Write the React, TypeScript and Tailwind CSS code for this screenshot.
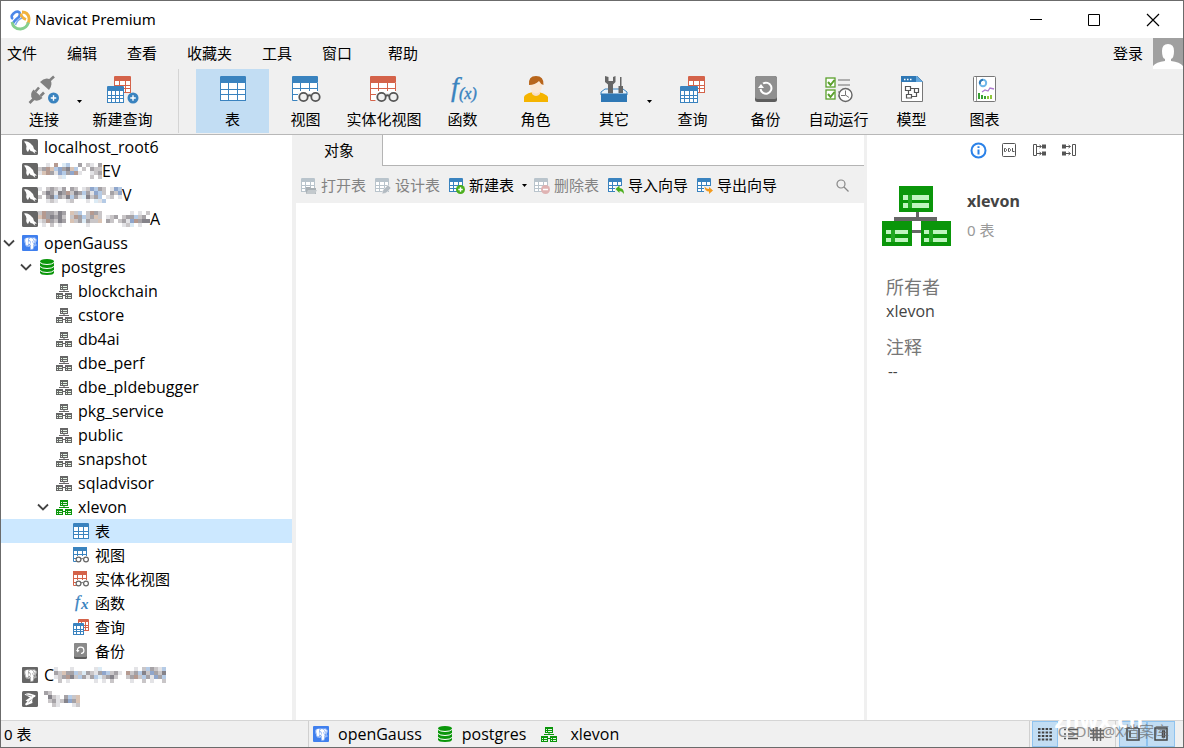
import { useState } from 'react';
import type { ReactNode } from 'react';
import { BiLogoPostgresql } from 'react-icons/bi';

const BLUE = '#3a83bf';
const RED = '#d4634a';
const PALE = '#b9c4cc';
const GREEN = '#0a960a';

interface GridProps {
  x: number;
  y: number;
  w: number;
  h: number;
  head: number;
  color: string;
  cols?: number;
  rows?: number;
}

function Grid({ x, y, w, h, head, color, cols = 3, rows = 3 }: GridProps) {
  const cw = (w - 1) / cols;
  const rh = (h - head - 1) / rows;
  return (
    <g>
      <rect x={x} y={y} width={w} height={h} rx={1} fill="#fff" />
      <rect x={x} y={y} width={w} height={head} rx={1} fill={color} />
      {Array.from({ length: cols + 1 }, (_, i) => (
        <rect key={`c${i}`} x={x + Math.round(i * cw)} y={y + head - 1} width={1} height={h - head + 1} fill={color} />
      ))}
      {Array.from({ length: rows }, (_, i) => (
        <rect key={`r${i}`} x={x} y={y + head + Math.round((i + 1) * rh)} width={w} height={1} fill={color} />
      ))}
    </g>
  );
}

function Plus({ cx, cy, r, color }: { cx: number; cy: number; r: number; color: string }) {
  return (
    <g>
      <circle cx={cx} cy={cy} r={r} fill={color} />
      <path d={`M${cx - r / 2} ${cy}h${r}M${cx} ${cy - r / 2}v${r}`} stroke="#fff" strokeWidth={1.4} />
    </g>
  );
}

function Svg({ w, h, children }: { w: number; h: number; children: ReactNode }) {
  return (
    <svg width={w} height={h} viewBox={`0 0 ${w} ${h}`} fill="none" className="shrink-0 overflow-visible" aria-hidden="true">
      {children}
    </svg>
  );
}

/* Toolbar icons */

const ConnectIcon = () => (
  <Svg w={32} h={28}>
    <path d="M12 6Q17 .500 22 3.500 25.500 8 21 14z" fill="#808080" />
    <path d="M21 5 26 .500" stroke="#808080" strokeWidth={2.600} />
    <path d="M5.500 13.500 14.500 22Q9 27 4.500 23 1 18.500 5.500 13.500z" fill="#808080" />
    <path d="M6.500 22 1.500 27M7.500 15.500l3.500-4M12.500 20l3.500-3.500" stroke="#808080" strokeWidth={2.600} />
    <Plus cx={25.5} cy={22} r={5.5} color={BLUE} />
  </Svg>
);

const NewQueryIcon = () => (
  <Svg w={32} h={28}>
    <Grid x={7} y={0} w={17} h={17} head={5} color={RED} />
    <Grid x={0} y={10} w={17} h={17} head={5} color={BLUE} cols={4} rows={3} />
    <Plus cx={26} cy={22} r={5.5} color={BLUE} />
  </Svg>
);

const TableIcon = () => (
  <Svg w={26} h={28}>
    <Grid x={0} y={0} w={26} h={25} head={7} color={BLUE} />
  </Svg>
);

function ViewIcon({ color }: { color: string }) {
  return (
    <Svg w={28} h={28}>
      <rect width={26} height={25} rx={1} fill="#fff" />
      <rect width={26} height={7} rx={1} fill={color} />
      <path d="M.5 6v18.500h5M.5 12.500h25M.5 18.500h6M8.500 7v8M17.500 7v8M25.500 7v8" stroke={color} />
      <path d="M6 17h22v9H6z" fill="#f0f0f0" />
      <circle cx={11.5} cy={21} r={4.200} stroke="#555" strokeWidth={1.800} fill="#f0f0f0" />
      <circle cx={23.5} cy={21} r={4.200} stroke="#555" strokeWidth={1.800} fill="#f0f0f0" />
      <path d="M15.500 20q2-1.500 4 0" stroke="#555" strokeWidth={1.800} />
    </Svg>
  );
}

const FunctionIcon = () => (
  <Svg w={30} h={28}>
    <text x={3} y={20} fontSize={28} fontStyle="italic" fill={BLUE} stroke={BLUE} strokeWidth={0.3} fontFamily="Liberation Serif, serif">f</text>
    <text x={11} y={23} fontSize={16} fontStyle="italic" fill={BLUE} stroke={BLUE} strokeWidth={0.4} fontFamily="Liberation Serif, serif">(x)</text>
  </Svg>
);

const RoleIcon = () => (
  <Svg w={26} h={28}>
    <path d="M1 26v-5q1-3 7-4.500h9q6 1.500 8 4.500v5z" fill="#f5b400" />
    <path d="M9 14h8v4q-4 4-8 0z" fill="#f7dcc2" />
    <ellipse cx={13} cy={10} rx={6} ry={7.500} fill="#fbe7d3" />
    <path d="M6 9Q5 0 13 0q8 0 7.500 9-3-1-4.500-4-4 4-10 4z" fill="#b8651b" />
  </Svg>
);

const OtherIcon = () => (
  <Svg w={28} h={28}>
    <path d="M1 16 5 13h18l4 3v3H1z" fill="#e9f2f9" stroke={BLUE} />
    <path d="M5 0v6l3 2.500v9h5v-9L15.500 6V0L13 1v4h-4.500V1z" fill="#666" />
    <path d="M20 1v9h-1.500v7h4.500v-7h-1.500V1z" fill="#666" />
    <path d="M1 17.500h26V26H1z" fill="#2f78b5" />
  </Svg>
);

const QueryIcon = () => (
  <Svg w={26} h={28}>
    <Grid x={8} y={0} w={17} h={17} head={5} color={RED} />
    <Grid x={0} y={10} w={18} h={17} head={5} color={BLUE} cols={4} />
  </Svg>
);

const BackupIcon = () => (
  <Svg w={22} h={28}>
    <rect width={22} height={26} rx={2.500} fill="#5d5d5d" />
    <rect width={22} height={23} rx={2.500} fill="#8f8f8f" />
    <path d="M5.500 13A5.500 5.500 0 1 0 8 7.500" stroke="#fff" strokeWidth={2} />
    <path d="M3 12h6L6 8z" fill="#fff" />
  </Svg>
);

const AutoRunIcon = () => (
  <Svg w={28} h={28}>
    <g stroke="#5aa02c" strokeWidth={1.300}>
      <rect x={1} y={2} width={9} height={9} fill="#fff" />
      <rect x={1} y={14} width={9} height={9} fill="#fff" />
      <path d="M3 6l2.500 3L9.500 4M3 18l2.500 3 4-5" strokeWidth={2} />
    </g>
    <path d="M13 4h12M13 9h12M13 16h3M13 20h2" stroke="#999" strokeWidth={1.600} />
    <circle cx={20.500} cy={19} r={6.500} fill="#fff" stroke="#666" strokeWidth={1.400} />
    <path d="M20.500 14.500V19l3.500 2.500M16 19.500h4.500" stroke="#777" />
  </Svg>
);

const ModelIcon = () => (
  <Svg w={22} h={28}>
    <path d="M.5.500h16l5 5v20H.5z" fill="#fff" stroke="#777" />
    <path d="M0 0h16l6 6H0z" fill="#2f78b5" />
    <path d="M15 0h1l6 6h-7z" fill="#65a9df" />
    <path d="M3 3.500h1.500M6 3.500h1.500M9 3.500h1.500" stroke="#fff" strokeWidth={1.500} />
    <g stroke="#555" strokeWidth={1.200}>
      <path d="M4.500 10.500h5v4h-5zM13.500 12.500h4v4h-4zM5.500 18.500h5v3.500h-5zM9.500 12.500h4M7.500 14.500v4M10.500 20.500h5v-4" />
    </g>
  </Svg>
);

const ChartIcon = () => (
  <Svg w={24} h={28}>
    <rect x={0.500} y={0.500} width={22} height={25} rx={1} fill="#fff" stroke="#777" />
    <path d="M3.500 1v24" stroke="#999" />
    <circle cx={10} cy={7} r={3.200} stroke="#6fb7ea" strokeWidth={2} />
    <path d="M10 3.800A3.200 3.200 0 0 0 7 8" stroke="#2f78b5" strokeWidth={2} />
    <path d="M9 16l3-2 3 1 2-3 4 1" stroke="#ae7bd0" strokeWidth={1.300} />
    <path d="M6 17v6M9 19v4M12 20v3" stroke="#3aa035" strokeWidth={2} />
    <path d="M15 20v3M18 19v4" stroke="#8fc63d" strokeWidth={2} />
  </Svg>
);

/* 16 x 16 icons for the tree, object bar and status bar */

const SmallTable = () => (
  <Svg w={16} h={16}>
    <Grid x={0} y={0} w={16} h={16} head={4} color={BLUE} />
  </Svg>
);

function SmallView({ color }: { color: string }) {
  return (
    <Svg w={16} h={16}>
      <path d="M0 0h14v4H0z" fill={color} />
      <path d="M.5 2v12.500h3M13.500 4v5M4.500 4v5M9.500 4v5M.5 7.500h13M.5 11.500h3" stroke={color} />
      <circle cx={5.500} cy={12.500} r={2.400} stroke="#666" fill="#fff" strokeWidth={1.200} />
      <circle cx={13} cy={12.500} r={2.400} stroke="#666" fill="#fff" strokeWidth={1.200} />
      <path d="M8 12q1.200-1 2.400 0" stroke="#666" />
    </Svg>
  );
}

const SmallFx = () => (
  <Svg w={16} h={16}>
    <text x={2} y={12} fontSize={17} fontStyle="italic" fill={BLUE} stroke={BLUE} strokeWidth={0.3} fontFamily="Liberation Serif, serif">f</text>
    <text x={8} y={14} fontSize={15} fontWeight={700} fontStyle="italic" fill={BLUE} fontFamily="Liberation Serif, serif">x</text>
  </Svg>
);

const SmallQuery = () => (
  <Svg w={16} h={16}>
    <Grid x={5} y={0} w={11} h={12} head={3} color={RED} />
    <Grid x={0} y={4} w={11} h={12} head={3} color={BLUE} />
  </Svg>
);

const SmallBackup = () => (
  <Svg w={16} h={16}>
    <rect x={1} width={13} height={16} rx={1.500} fill="#5d5d5d" />
    <rect x={1} width={13} height={14} rx={1.500} fill="#8a8a8a" />
    <path d="M4.500 7.500A3.200 3.200 0 1 1 8 10.500" stroke="#fff" strokeWidth={1.200} />
    <path d="M3 7h3.500L4.800 9.500z" fill="#fff" />
  </Svg>
);

const MysqlIcon = () => (
  <Svg w={16} h={16}>
    <rect width={16} height={16} rx={1.500} fill="#666" />
    <path d="M2 2.500Q5 1.500 8 4q3.500 2.500 4 6l3 2.500-2.500.300 1 2.200-3-2.500Q8 12.500 7.500 10L6 13Q3.500 11 4.500 7.500 4 4.500 2 2.500z" fill="#fff" />
  </Svg>
);

const SqlServerIcon = () => (
  <Svg w={16} h={16}>
    <rect width={16} height={16} rx={1.500} fill="#666" />
    <path d="M2.500 3.500Q6 1.500 8 2.500l5.500 1.800Q14 6 11.500 6.500 9.500 8.500 10.500 12L4 14.500 3 13l2.500-2.500L3.500 9.500 8 6.500z" fill="#fff" />
    <path d="M4 3.800l6 1.200M6.500 11l3-2.500" stroke="#888" strokeWidth={0.800} />
  </Svg>
);

function PgIcon({ active }: { active?: boolean }) {
  return (
    <span
      className={`flex size-4 shrink-0 items-center justify-center rounded-[1px] text-white ${active ? 'bg-[#3f7fee]' : 'bg-[#666]'}`}
    >
      <BiLogoPostgresql size={15} />
    </span>
  );
}

const DbIcon = () => (
  <Svg w={16} h={16}>
    <path d="M1 2.500Q1 0 8 0t7 2.500v11Q15 16 8 16t-7-2.500z" fill={GREEN} />
    <path d="M1 3.500Q3 5.500 8 5.500t7-2M1 7.500q2 2 7 2t7-2M1 11.500q2 2 7 2t7-2" stroke="#fff" />
  </Svg>
);

function SchemaIcon({ color }: { color: string }) {
  return (
    <Svg w={16} h={16}>
      <path d="M4 1h8v6H4zM0 10h7v6H0zM9 10h7v6H9zM7.500 7h1v2h-1zM3 8h10v1H3zM7 12h2v1H7z" fill={color} />
      <path d="M5 3.500h1M7 3.500h4M5 5.500h1M7 5.500h4M1 12.500h1M3 12.500h3M1 14.500h1M3 14.500h3M10 12.500h1M12 12.500h3M10 14.500h1M12 14.500h3" stroke="#e4f4e4" />
    </Svg>
  );
}

function ObjectIcon({ muted, children }: { muted?: boolean; children: ReactNode }) {
  return (
    <Svg w={16} h={16}>
      <Grid x={0} y={0} w={14} h={14} head={4} color={muted ? PALE : BLUE} />
      {children}
    </Svg>
  );
}

/* Pixelated names of private connections */

const TILE_COLORS: Record<string, string> = {
  a: '#e3e3e6',
  b: '#c9c6c8',
  c: '#a5a2a6',
  d: '#85838a',
  e: '#d9c3b4',
  f: '#b59a90',
  g: '#b5cbe6',
  h: '#8fa6cc',
  i: '#dcebf5',
};

function Mosaic({ tiles }: { tiles: string[] }) {
  return (
    <Svg w={tiles[0].length * 4} h={tiles.length * 4}>
      {tiles.flatMap((line, y) =>
        line.split('').map((t, x) =>
          t === '.' ? null : <rect key={`${x}-${y}`} x={x * 4} y={y * 4} width={4} height={4} fill={TILE_COLORS[t]} />,
        ),
      )}
    </Svg>
  );
}

interface TreeNode {
  id: string;
  label: string;
  depth: number;
  icon: ReactNode;
  open?: boolean;
  before?: ReactNode;
  after?: ReactNode;
  tight?: boolean;
}

const schemas = ['blockchain', 'cstore', 'db4ai', 'dbe_perf', 'dbe_pldebugger', 'pkg_service', 'public', 'snapshot', 'sqladvisor'];

const tree: TreeNode[] = [
  { id: 'root6', label: 'localhost_root6', depth: 0, icon: <MysqlIcon /> },
  { id: 'dev', label: 'EV', depth: 0, icon: <MysqlIcon />, tight: true, before: <Mosaic tiles={['..a.f.ig..c.ba.c', 'bcfeghcdeg.b.cbb', 'aefcahgchfa..abc', '.....ai......b.b']} /> },
  { id: 'tv', label: 'V', depth: 0, icon: <MysqlIcon />, tight: true, before: <Mosaic tiles={['a.bcbac.cb.abhgcb.ahg', '.bdcadcfbdcgcahgb.cbh', 'b.cdgcbdgcaidbcg.ab.a', '..aba..ab...a.iag....']} /> },
  { id: 'a', label: 'A', depth: 0, icon: <MysqlIcon />, tight: true, before: <Mosaic tiles={['bfccbdc.ebg.bfcb.......a.a.b', 'efcdcdb.bfcgbceb.abc.bccgbc.', 'abfcbdc.ebcicbbe.cb.bcahfcdd', '.a.b.a......a........abi.a..']} /> },
  { id: 'opengauss', label: 'openGauss', depth: 0, icon: <PgIcon active />, open: true },
  { id: 'postgres', label: 'postgres', depth: 1, icon: <DbIcon />, open: true },
  ...schemas.map((name) => ({ id: name, label: name, depth: 2, icon: <SchemaIcon color="#666" /> })),
  { id: 'xlevon', label: 'xlevon', depth: 2, icon: <SchemaIcon color={GREEN} />, open: true },
  { id: 'tables', label: '表', depth: 3, icon: <SmallTable /> },
  { id: 'views', label: '视图', depth: 3, icon: <SmallView color={BLUE} /> },
  { id: 'mviews', label: '实体化视图', depth: 3, icon: <SmallView color={RED} /> },
  { id: 'functions', label: '函数', depth: 3, icon: <SmallFx /> },
  { id: 'queries', label: '查询', depth: 3, icon: <SmallQuery /> },
  { id: 'backups', label: '备份', depth: 3, icon: <SmallBackup /> },
  { id: 'og2', label: 'C', depth: 0, icon: <PgIcon />, after: <Mosaic tiles={['a...a.....ai........a.bgcbag', 'cbeccgbicbachgbca.fbcgdbhcbd', 'abcfdbgcacgibcdb..bcfbgcahcg', '.b.a......a.a.b....a..b.a..b']} /> },
  { id: 'mssql', label: '', depth: 0, icon: <SqlServerIcon />, after: <Mosaic tiles={['cb.......', '.dba.cgbe', '.bcabdhce', '..ba...ab']} /> },
];

const indents = ['pl-0', 'pl-[17px]', 'pl-[34px]', 'pl-[51px]'];

const latin = "font-['Open_Sans','Noto_Sans_CJK_SC',sans-serif] text-base";

function Chevron() {
  return (
    <Svg w={12} h={8}>
      <path d="M1 1.500l5 5 5-5" stroke="#444" strokeWidth={1.800} />
    </Svg>
  );
}

const Caret = () => (
  <Svg w={5} h={3}>
    <path d="M0 0h5L2.500 3z" fill="#000" />
  </Svg>
);

const menus = ['文件', '编辑', '查看', '收藏夹', '工具', '窗口', '帮助'];

const tools = [
  { label: '表', icon: <TableIcon />, width: 'w-[73px]' },
  { label: '视图', icon: <ViewIcon color={BLUE} />, width: 'w-[73px]' },
  { label: '实体化视图', icon: <ViewIcon color={RED} />, width: 'w-[84px]' },
  { label: '函数', icon: <FunctionIcon />, width: 'w-[73px]' },
  { label: '角色', icon: <RoleIcon />, width: 'w-[73px]' },
  { label: '其它', icon: <OtherIcon />, width: 'w-[84px]', caret: true },
  { label: '查询', icon: <QueryIcon />, width: 'w-[73px]' },
  { label: '备份', icon: <BackupIcon />, width: 'w-[73px]' },
  { label: '自动运行', icon: <AutoRunIcon />, width: 'w-[73px]' },
  { label: '模型', icon: <ModelIcon />, width: 'w-[73px]' },
  { label: '图表', icon: <ChartIcon />, width: 'w-[73px]' },
];

interface ToolButtonProps {
  label: string;
  icon: ReactNode;
  width: string;
  active?: boolean;
  caret?: boolean;
  onClick?: () => void;
}

function ToolButton({ label, icon, width, active, caret, onClick }: ToolButtonProps) {
  return (
    <button
      type="button"
      onClick={onClick}
      className={`relative flex h-16 shrink-0 flex-col items-center gap-[3px] pt-[7px] whitespace-nowrap ${width} ${active ? 'bg-[#c2ddf3]' : ''}`}
    >
      {icon}
      <span className="leading-6">{label}</span>
      {caret && (
        <span className="absolute top-[31px] right-1">
          <Caret />
        </span>
      )}
    </button>
  );
}

const objectActions = [
  {
    label: '打开表',
    muted: true,
    icon: (
      <ObjectIcon muted>
        <path d="M5 9h4l1 1h5v6H5z" fill="#a9b0b5" />
        <path d="M7 12h9l-2 4H5z" fill="#c3c9cd" />
      </ObjectIcon>
    ),
  },
  {
    label: '设计表',
    muted: true,
    icon: (
      <ObjectIcon muted>
        <path d="M7 16l1-4 5-5 3 3-5 5z" fill="#b3bbc2" stroke="#f0f0f0" strokeWidth={0.500} />
      </ObjectIcon>
    ),
  },
  {
    label: '新建表',
    caret: true,
    icon: (
      <ObjectIcon>
        <Plus cx={11.500} cy={11.500} r={4.500} color="#4caf1e" />
      </ObjectIcon>
    ),
  },
  {
    label: '删除表',
    muted: true,
    icon: (
      <ObjectIcon muted>
        <circle cx={11.500} cy={11.500} r={4.500} fill="#dfb3b3" />
        <path d="M9 11.500h5" stroke="#fff" strokeWidth={1.500} />
      </ObjectIcon>
    ),
  },
  {
    label: '导入向导',
    icon: (
      <ObjectIcon>
        <path d="M7 8h9v8H7z" fill="#f0f0f0" />
        <path d="M7.500 11l4-3.500v2.500q4.500 0 4.500 6-2-3-4.500-3v2z" fill="#4caf1e" />
      </ObjectIcon>
    ),
  },
  {
    label: '导出向导',
    icon: (
      <ObjectIcon>
        <path d="M7 8h9v8H7z" fill="#f0f0f0" />
        <path d="M16 12.500 12 16v-2.500q-4 0-4.500-5 2 2.500 4.500 2.500V9z" fill="#f39a1c" />
      </ObjectIcon>
    ),
  },
];

function InfoPane() {
  return (
    <aside className="flex w-[316px] shrink-0 flex-col bg-white">
      <div className="flex h-[30px] items-center justify-center gap-[14px] pr-[3px]">
        <button type="button" aria-label="信息">
          <Svg w={17} h={17}>
            <circle cx={8.500} cy={8.500} r={7} stroke="#2b82e8" strokeWidth={2} />
            <path d="M8.500 7.500v5M8.500 4.200V6" stroke="#2b82e8" strokeWidth={2} />
          </Svg>
        </button>
        <button type="button" aria-label="DDL">
          <Svg w={16} h={16}>
            <rect x={1.500} y={1.500} width={13} height={13} rx={1} stroke="#555" />
            <path d="M3.500 6.500h1l1 1v1l-1 1h-1zM7.500 6.500h1l1 1v1l-1 1h-1zM11.500 6v3.500h2" stroke="#555" />
          </Svg>
        </button>
        <button type="button" aria-label="使用">
          <Svg w={16} h={16}>
            <path d="M2.500 2.500h3v11h-3zM6 4.500h4M6 11.500h4M8.500 3l2 1.500-2 1.500M8.500 10l2 1.500-2 1.500" stroke="#555" />
            <path d="M11 2.500h4v4h-4zM11 9.500h4v4h-4z" fill="#555" />
          </Svg>
        </button>
        <button type="button" aria-label="被使用">
          <Svg w={16} h={16}>
            <path d="M11.500 2.500h3v11h-3zM5 4.500h4M5 11.500h4M7.500 3l2 1.500-2 1.500M7.500 10l2 1.500-2 1.500" stroke="#555" />
            <path d="M1 2.500h4v4H1zM1 9.500h4v4H1z" fill="#555" />
          </Svg>
        </button>
      </div>
      <div className="flex gap-4 pt-[21px] pl-[15px]">
        <Svg w={69} h={60}>
          <path d="M17 0h34v26H17zM0 35h30v25H0zM39 35h30v25H39z" fill={GREEN} />
          <path d="M34 26h3v5h18v4H12v-4h22zM30 44h9v3h-9z" fill="#666" />
          <path d="M21 9h26v5H21zM21 17h26v5H21zM4 44h22v4H4zM4 52h22v4H4zM42 44h23v4H42zM42 52h23v4H42z" fill="#bff5bf" />
          <path d="M26 9h4v13h-4zM9 44h4v12H9zM47 44h4v12h-4z" fill="#22a722" />
        </Svg>
        <div>
          <h2 className="text-base leading-[30px] font-bold text-[#444]">xlevon</h2>
          <p className="leading-7 text-[#999]">0 表</p>
        </div>
      </div>
      <dl className="pt-[29px] pl-[19px] text-[#444]">
        <dt className="text-lg leading-6 text-[#777]">所有者</dt>
        <dd className={`leading-6 ${latin}`}>xlevon</dd>
        <dt className="mt-3 text-lg leading-6 text-[#777]">注释</dt>
        <dd className="pl-0.5 leading-6">--</dd>
      </dl>
    </aside>
  );
}

function StatusBar() {
  return (
    <footer className="relative flex h-[27px] shrink-0 items-center border-t border-[#d5d5d5] bg-[#f0f0f0]">
      <span className="w-[307px] pl-[3px]">0 表</span>
      <div className={`flex h-full flex-1 items-center gap-[9px] border-l border-[#d0d0d0] pl-1 ${latin}`}>
        <PgIcon active />
        <span className="mr-1.5">openGauss</span>
        <DbIcon />
        <span className="mr-1.5">postgres</span>
        <SchemaIcon color={GREEN} />
        <span className="ml-1">xlevon</span>
      </div>
      <div className="flex h-full items-center border-l border-[#d0d0d0] pr-2 pl-0.5">
        <button type="button" aria-label="列表" className="flex h-full w-[26px] items-center justify-center border border-[#8fc3ef] bg-[#c2ddf3]">
          <Svg w={14} h={12}>
            <path d="M0 1h14M0 4.500h14M0 8h14M0 11.500h14" stroke="#444" strokeWidth={2} strokeDasharray="2.500 1.300" />
          </Svg>
        </button>
        <button type="button" aria-label="详细信息" className="flex h-full w-[26px] items-center justify-center">
          <Svg w={14} h={12}>
            <path d="M0 1.500h2M4 1.500h10M0 6h2M4 6h10M0 10.500h2M4 10.500h10" stroke="#555" strokeWidth={1.500} />
          </Svg>
        </button>
        <button type="button" aria-label="ER 图表" className="flex h-full w-[26px] items-center justify-center">
          <Svg w={14} h={14}>
            <path d="M0 3.500h14M0 7h14M0 10.500h14M3.500 0v14M7 0v14M10.500 0v14" stroke="#666" strokeWidth={1.500} />
          </Svg>
        </button>
        <span className="mr-[3px] ml-[5px] h-full w-px bg-[#d0d0d0]" />
        <button type="button" aria-label="导航窗格" className="flex h-full w-7 items-center justify-center border border-[#8fc3ef] bg-[#c2ddf3]">
          <Svg w={14} h={14}>
            <path d="M1 1h12v12H1zM4 3.500v7" stroke="#444" strokeWidth={1.500} />
          </Svg>
        </button>
        <button type="button" aria-label="信息窗格" className="flex h-full w-7 items-center justify-center border border-[#8fc3ef] bg-[#c2ddf3]">
          <Svg w={14} h={14}>
            <path d="M1 1h12v12H1zM8.500 4h2v6h-2z" stroke="#444" strokeWidth={1.500} />
          </Svg>
        </button>
      </div>
      <span className="pointer-events-none absolute -top-3.5 right-10 text-[22px] leading-6 font-bold text-white">znwx.cn</span>
      <span className="pointer-events-none absolute top-0 right-3.5 leading-5 text-[#6b6b6b] opacity-70">CSDN @X档案库</span>
    </footer>
  );
}

export default function App() {
  const [selected, setSelected] = useState('tables');
  const [tool, setTool] = useState('表');

  return (
    <div className="flex h-screen flex-col border border-[#6b6b6b] bg-white font-['Noto_Sans','Noto_Sans_CJK_SC',sans-serif] text-[15px] text-black">
      <header className="flex h-[37px] shrink-0 items-center pl-2">
        <Svg w={22} h={22}>
          <path d="M4 10Q1 8 4.500 4.500 8 1.500 10.500 3.500 12 7 8 9.500 5.500 11.500 3.500 15" stroke="#4b86e8" strokeWidth={2.600} />
          <path d="M13 3q6 0 7 6 .5 4-2 6M12 4.500q0 4 5 6" stroke="#f2b33d" strokeWidth={2.800} />
          <path d="M3 13Q4 20 11.500 20 17.500 19.500 19.500 13.500" stroke="#86cf8e" strokeWidth={2.800} />
          <path d="M6.500 16Q8 11 13 9" stroke="#7aa7ee" strokeWidth={1.400} />
        </Svg>
        <h1 className="ml-1 flex-1">Navicat Premium</h1>
        <div className="flex h-full">
          <button type="button" aria-label="最小化" className="flex w-[58px] items-center justify-center">
            <Svg w={12} h={12}><path d="M0 5.500h12" stroke="#000" /></Svg>
          </button>
          <button type="button" aria-label="最大化" className="flex w-[58px] items-center justify-center">
            <Svg w={12} h={12}><path d="M.5.500h11v11H.5z" stroke="#000" /></Svg>
          </button>
          <button type="button" aria-label="关闭" className="flex w-[60px] items-center justify-center">
            <Svg w={12} h={12}><path d="M0 0l12 12M12 0 0 12" stroke="#000" strokeWidth={1.200} /></Svg>
          </button>
        </div>
      </header>

      <nav className="flex h-[31px] shrink-0 items-center gap-[30px] bg-[#f0f0f0] pl-1.5">
        {menus.map((m) => (
          <button key={m} type="button" className="last-of-type:ml-1.5">{m}</button>
        ))}
        <div className="ml-auto flex h-full items-center gap-2.5">
          <a href="#login">登录</a>
          <svg width={30} height={31} viewBox="0 0 30 31" className="bg-[#a0a0a0]" aria-hidden="true">
            <path d="M15 6q6 0 6 7t-3 8v2q9 1 12 5v3H0v-3q3-4 12-5v-2q-3-1-3-8t6-7z" fill="#fff" />
          </svg>
        </div>
      </nav>

      <div className="flex h-[66px] shrink-0 items-start overflow-hidden border-b border-[#b8b8b8] bg-[#f0f0f0] pl-px">
        <ToolButton label="连接" icon={<ConnectIcon />} width="w-[84px]" caret />
        <ToolButton label="新建查询" icon={<NewQueryIcon />} width="w-[73px]" />
        <span className="mr-[17px] ml-[19px] h-16 w-px bg-[#d4d4d4]" />
        {tools.map((t) => (
          <ToolButton key={t.label} {...t} active={tool === t.label} onClick={() => setTool(t.label)} />
        ))}
      </div>

      <main className="flex min-h-0 flex-1">
        <ul className="w-[291px] shrink-0 overflow-hidden">
          {tree.map((n) => (
            <li key={n.id} className={selected === n.id ? 'bg-[#cce8ff]' : ''}>
              <button
                type="button"
                onClick={() => setSelected(n.id)}
                className={`flex h-6 w-full items-center text-left whitespace-nowrap ${indents[n.depth]} ${n.depth < 3 ? latin : ''}`}
              >
                <span className="w-[21px] shrink-0 pl-0.5">{n.open && <Chevron />}</span>
                {n.icon}
                <span className={`flex items-center ${n.tight ? '' : 'ml-1.5'}`}>
                  {n.before}
                  {n.label}
                  {n.after}
                </span>
              </button>
            </li>
          ))}
        </ul>
        <div className="w-1 shrink-0 bg-[#f0f0f0]" />

        <section className="flex min-w-0 flex-1 flex-col">
          <div className="flex h-[31px] shrink-0 bg-[#f0f0f0]">
            <button type="button" className="w-[86px]">对象</button>
            <div className="flex-1 border-b border-l border-[#b4b4b4] bg-white" />
          </div>
          <div className="flex h-[37px] shrink-0 items-center gap-[9px] bg-[#f0f0f0] pt-0.5 pr-[15px] pl-[5px] whitespace-nowrap">
            {objectActions.map((a) => (
              <button
                key={a.label}
                type="button"
                disabled={a.muted}
                className={`flex items-center gap-1 ${a.muted ? 'text-[#838383]' : ''}`}
              >
                {a.icon}
                {a.label}
                {a.caret && (
                  <span className="-mr-0.5 ml-1">
                    <Caret />
                  </span>
                )}
              </button>
            ))}
            <button type="button" aria-label="搜索" className="ml-auto">
              <Svg w={13} h={13}>
                <circle cx={5} cy={5} r={4} stroke="#888" strokeWidth={1.200} />
                <path d="M8 8l4.500 4.500" stroke="#888" strokeWidth={1.200} />
              </Svg>
            </button>
          </div>
        </section>
        <div className="w-[3px] shrink-0 bg-[#f0f0f0]" />
        <InfoPane />
      </main>

      <StatusBar />
    </div>
  );
}
